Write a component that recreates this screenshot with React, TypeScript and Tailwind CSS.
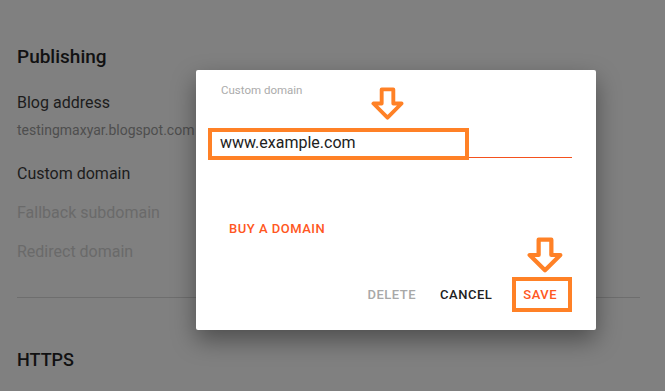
function DownArrow({ className }: { className?: string }) {
  return (
    <svg className={className} viewBox="0 0 34 34" fill="none">
      <path
        d="M11 2.5H23V17H31.5L17 31.5L2.5 17H11Z"
        fill="#fff"
        stroke="#ff8126"
        strokeWidth={4}
        strokeLinejoin="round"
      />
    </svg>
  );
}

export default function App() {
  return (
    <div className="relative w-[665px] h-[391px] overflow-hidden bg-[#808080] font-['Roboto',sans-serif]">
      {/* Settings page (under scrim) */}
      <div className="pl-[17px] pt-[45px] w-[640px]">
        <h2 className="text-[19px] leading-[24px] font-medium text-[#111112]">Publishing</h2>
        <div className="mt-[24px] text-[16px] leading-[20px] text-[#1c1c1c]">Blog address</div>
        <div className="mt-[9px] text-[14px] leading-[16px] text-[#4e4e4e]">testingmaxyar.blogspot.com</div>
        <div className="mt-[26px] text-[16px] leading-[20px] text-[#1c1c1c]">Custom domain</div>
        <div className="mt-[19px] text-[16px] leading-[20px] text-[#6a6a6a]">Fallback subdomain</div>
        <div className="mt-[19px] text-[16px] leading-[20px] text-[#6a6a6a]">Redirect domain</div>
        <div className="mt-[35px] h-px bg-[#6e6e6e]" />
        <h2 className="mt-[50px] text-[18px] leading-[24px] font-medium text-[#111112]">HTTPS</h2>
      </div>

      {/* Dialog */}
      <div className="absolute left-[196px] top-[70px] w-[400px] h-[260px] bg-white rounded-[2px] shadow-[0_10px_24px_rgba(0,0,0,0.4)] px-[24px] pt-[13px]">
        <div className="relative">
          <div className="text-[11.5px] leading-[14px] text-[#ababab] ml-[1px]">Custom domain</div>
          <div className="mt-[35px] pb-[3px] text-[16px] leading-[22px] text-[#212121]">www.example.com</div>
          <div className="h-px bg-[#f4511e]" />
          <div className="absolute left-[-12px] top-[45px] w-[261px] h-[32px] border-[4px] border-[#ff8126]" />
          <DownArrow className="absolute left-[151px] top-[4px] w-[33px] h-[33px]" />
        </div>

        <div className="mt-[63px] ml-[9px] text-[13px] leading-[16px] font-medium text-[#ff5722] tracking-[0.5px]">
          BUY A DOMAIN
        </div>

        <div className="relative mt-[50px] flex items-center justify-end text-[13px] leading-[16px] font-medium tracking-[0.5px]">
          <span className="text-[#a8a8a8]">DELETE</span>
          <span className="ml-[24px] text-[#212121]">CANCEL</span>
          <span className="ml-[31px] mr-[15px] text-[#ff5722]">SAVE</span>
          <div className="absolute right-[0px] top-[-10px] w-[60px] h-[35px] border-[4px] border-[#ff8126]" />
          <DownArrow className="absolute right-[9px] top-[-51px] w-[36px] h-[38px]" />
        </div>
      </div>
    </div>
  );
}
